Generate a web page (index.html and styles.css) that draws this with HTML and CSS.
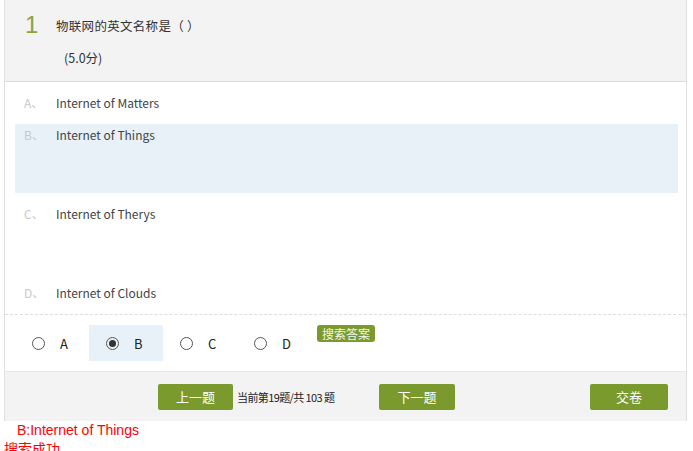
FILE: index.html
```html
<!DOCTYPE html>
<html>
	<head>
		<meta charset="utf-8" />
		<title>答题</title>
		<link rel="stylesheet" href="styles.css">
	</head>
	<body>
		<div class="paper">
			<div class="q-head">
				<div class="q-title">
					<span class="q-num">1</span>
					<span class="q-text">物联网的英文名称是（ ）</span>
				</div>
				<div class="q-score">(5.0分)</div>
			</div>

			<ul class="q-options">
				<li class="opt">
					<span class="opt-key">A、</span>
					<span class="opt-text">Internet of Matters</span>
				</li>
				<li class="opt opt-tall opt-active">
					<span class="opt-key">B、</span>
					<span class="opt-text">Internet of Things</span>
				</li>
				<li class="opt opt-tall">
					<span class="opt-key">C、</span>
					<span class="opt-text">Internet of Therys</span>
				</li>
				<li class="opt">
					<span class="opt-key">D、</span>
					<span class="opt-text">Internet of Clouds</span>
				</li>
			</ul>

			<div class="q-answer">
				<label class="choice"><i class="radio"></i>A</label>
				<label class="choice choice-on"><i class="radio radio-on"></i>B</label>
				<label class="choice"><i class="radio"></i>C</label>
				<label class="choice"><i class="radio"></i>D</label>
				<span class="search-btn">搜索答案</span>
			</div>

			<div class="q-foot">
				<a class="btn">上一题</a>
				<span class="q-count">当前第19题/共 103 题</span>
				<a class="btn btn-next">下一题</a>
				<a class="btn btn-submit">交卷</a>
			</div>
		</div>

		<div class="result">
			<p class="result-answer">B:Internet of Things</p>
			<p class="result-msg">搜索成功</p>
		</div>
	</body>
</html>
```

FILE: styles.css
```css
*{
	margin: 0;
	padding: 0;
}

body{
	font-family: "Noto Sans CJK SC", "Liberation Sans", sans-serif;
	font-size: 12px;
	color: #333;
	background-color: #fff;
	overflow: hidden;
}

.paper{
	width: 681px;
	margin-left: 4px;
	border-left: 1px solid #e0e0e0;
	border-right: 1px solid #e0e0e0;
}

.q-head{
	height: 81px;
	background-color: #f3f3f3;
	border-bottom: 1px solid #dcdcdc;
}

.q-title{
	display: flex;
	align-items: center;
	height: 50px;
	padding-left: 20px;
}

.q-num{
	width: 31px;
	font-family: "Liberation Sans", sans-serif;
	font-size: 24px;
	color: #86a53a;
}

.q-text{
	font-size: 12.5px;
	letter-spacing: 0.3px;
	color: #333;
}

.q-score{
	padding-left: 59px;
	line-height: 16px;
	font-size: 12.5px;
}

.q-options{
	list-style: none;
	padding: 10px 0;
	border-bottom: 1px dashed #ddd;
}

.opt{
	display: flex;
	margin: 0 8px 10px 10px;
	padding-left: 9px;
	line-height: 22px;
	color: #444;
}

.opt:last-child{
	margin-bottom: 0;
}

.opt-tall{
	height: 69px;
}

.opt-active{
	background-color: #e8f1f7;
}

.opt-key{
	width: 32px;
	color: #c8c8c8;
}

.q-answer{
	display: flex;
	align-items: flex-start;
	height: 57px;
	padding: 10px 0 0 10px;
	border-bottom: 1px solid #e6e6e6;
	box-sizing: border-box;
}

.choice{
	display: flex;
	align-items: center;
	width: 74px;
	height: 36px;
	padding-left: 17px;
	box-sizing: border-box;
	font-size: 13px;
	color: #222;
}

.choice-on{
	background-color: #e8f1f7;
}

.radio{
	display: block;
	width: 11px;
	height: 11px;
	margin-right: 15px;
	border: 1px solid #555;
	border-radius: 50%;
	position: relative;
}

.radio-on::after{
	content: "";
	position: absolute;
	left: 2px;
	top: 2px;
	width: 7px;
	height: 7px;
	border-radius: 50%;
	background-color: #333;
}

.search-btn{
	margin-left: 6px;
	padding: 0 5px;
	height: 17px;
	line-height: 17px;
	font-size: 12px;
	color: #f4f7ea;
	background-color: #7a9a2e;
	border-radius: 3px;
}

.q-foot{
	display: flex;
	align-items: center;
	height: 49px;
	padding-left: 153px;
	background-color: #f3f3f3;
}

.btn{
	display: block;
	width: 75px;
	height: 26px;
	line-height: 26px;
	text-align: center;
	font-size: 13px;
	color: #fff;
	background-color: #7a9a2e;
	border-radius: 2px;
}

.q-count{
	width: 146px;
	padding-left: 4px;
	box-sizing: border-box;
	font-size: 11px;
	letter-spacing: -0.6px;
	color: #222;
}

.btn-next{
	width: 76px;
}

.btn-submit{
	width: 78px;
	margin-left: auto;
	margin-right: 18px;
}

.result{
	color: #f00;
	font-size: 14px;
	line-height: 18px;
}

.result-answer{
	padding-left: 17px;
	font-family: "Liberation Sans", sans-serif;
}

.result-msg{
	padding-left: 4px;
}
```
